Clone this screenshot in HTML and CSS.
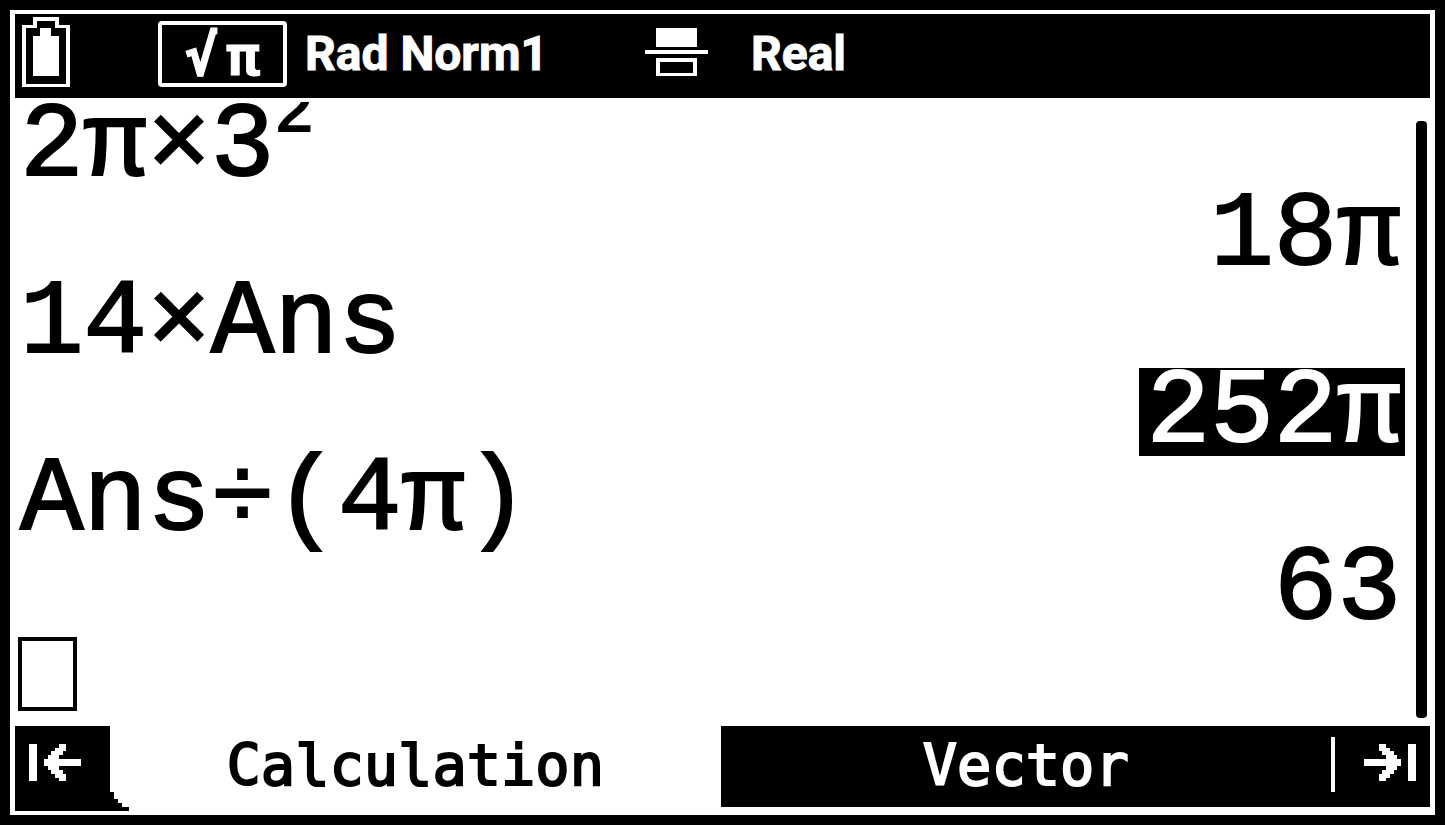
FILE: index.html
```html
<!DOCTYPE html>
<html lang="en">
<head>
    <meta charset="utf-8">
    <title>Calculator</title>
    <link rel="stylesheet" href="styles.css">
</head>
<body>
    <div class="screen">
        <header class="status">
            <svg class="battery" width="48" height="70" viewBox="0 0 48 70" role="img" aria-label="Battery full">
                <path fill-rule="evenodd" d="M11 0H37V8H48V70H0V8H11Z M15 4H33V11H44V67H4V11H15Z"/>
                <path d="M18 11H29V19H37V59H11V19H18Z"/>
            </svg>
            <div class="format"><span>√</span><span>π</span></div>
            <span class="angle">Rad Norm1</span>
            <svg class="fraction" width="63" height="48" viewBox="0 0 63 48" role="img" aria-label="Fraction results">
                <path fill-rule="evenodd" d="M11 0H52V19H11Z M0 22H63V26H0Z M11 30H52V48H11Z M15 34H48V45H15Z"/>
            </svg>
            <span>Real</span>
        </header>

        <main class="work">
            <div class="history">
                <div class="entry">2π×3<span class="power">2</span></div>
                <div class="result">18π</div>
                <div class="entry">14×Ans</div>
                <div class="result"><mark>252π</mark></div>
                <div class="entry">Ans÷(4π)</div>
                <div class="result">63</div>
                <div class="entry"><input class="cursor" type="text" aria-label="New calculation"></div>
            </div>
            <div class="scrollbar"></div>
        </main>

        <nav class="tabs">
            <button class="arrow first" type="button" aria-label="First tab">
                <svg width="52" height="37" viewBox="0 0 52 37">
                    <path d="M0 0H8V37H0Z M30 0H37V7H34V11H30V15H52V22H30V26H34V30H37V37H30V34H26V30H22V26H19V22H15V15H19V11H22V7H26V4H30Z"/>
                </svg>
                <svg class="corner" width="19" height="19" viewBox="0 0 19 19">
                    <path d="M0 0H4V7H8V11H12V15H19V19H0Z"/>
                </svg>
            </button>
            <button class="tab active" type="button">Calculation</button>
            <button class="tab" type="button">Vector</button>
            <button class="arrow last" type="button" aria-label="Last tab">
                <svg width="52" height="37" viewBox="0 0 52 37">
                    <path d="M44 0H52V37H44Z M22 0H15V7H18V11H22V15H0V22H22V26H18V30H15V37H22V34H26V30H30V26H33V22H37V15H33V11H30V7H26V4H22Z"/>
                </svg>
            </button>
        </nav>
    </div>
</body>
</html>
```

FILE: styles.css
```css
* {
    box-sizing: border-box;
}
body {
    margin: 0;
    padding: 10px;
    height: 100vh;
    background: #000;
}
button {
    border: 0;
    padding: 0;
    color: inherit;
    font: inherit;
}
svg {
    flex: none;
    fill: #fff;
    shape-rendering: crispEdges;
}
.screen {
    display: flex;
    flex-direction: column;
    height: 100%;
    padding: 4px 5px;
    background: #fff;
}

/* status bar */
.status {
    display: flex;
    align-items: center;
    height: 84px;
    padding: 0 7px 4px;
    background: #000;
    color: #fff;
    font: bold 48px/80px Roboto, sans-serif;
    white-space: pre;
    -webkit-text-stroke: 1px;
}
.battery, .fraction {
    margin-bottom: 4px;
}
.format {
    display: flex;
    justify-content: center;
    align-items: center;
    gap: 8px;
    width: 129px;
    height: 66px;
    margin: 0 18px 0 88px;
    border: 4px solid #fff;
    border-radius: 4px;
    padding-top: 4px;
    font: bold 56px/54px "DejaVu Sans Mono", monospace;
}
.angle {
    width: 340px;
}
.fraction {
    margin-right: 43px;
}

/* calculations */
.work {
    flex: 1;
    display: flex;
    gap: 11px;
    min-height: 0;
    padding: 4px 3px 4px 1px;
}
.history {
    flex: 1;
    display: grid;
    grid-template-rows: repeat(7, 1fr);
    overflow: hidden;
    font: 106px/90px "Liberation Mono", monospace;
    -webkit-text-stroke: 2px;
}
.entry, .result {
    min-height: 0;
    white-space: nowrap;
}
.entry {
    padding-left: 4px;
}
.result {
    padding-right: 4px;
    text-align: right;
}
.result mark {
    display: inline-block;
    height: 88px;
    margin-right: -4px;
    padding: 0 4px 0 8px;
    background: #000;
    color: #fff;
}
.power {
    font-size: 66px;
    line-height: 0;
    vertical-align: 44px;
}
.cursor {
    display: block;
    width: 59px;
    height: 74px;
    margin: 4px -2px;
    border: 4px solid #000;
    padding: 0 4px;
    background: #fff;
    font: inherit;
    font-size: 66px;
}
.scrollbar {
    width: 11px;
    margin-top: 19px;
    margin-bottom: 4px;
    border-radius: 4px;
    background: #000;
}

/* tabs */
.tabs {
    display: flex;
    height: 85px;
    color: #fff;
    font: 57px/72px "DejaVu Sans Mono", monospace;
    -webkit-text-stroke: 2px;
}
.tab, .arrow {
    margin-bottom: 4px;
    background: #000;
}
.tab {
    flex: 1;
    padding-bottom: 4px;
}
.tab.active {
    background: #fff;
    color: #000;
}
.arrow {
    display: flex;
    align-items: center;
    width: 95px;
    padding: 0 14px 8px;
}
.arrow.first {
    position: relative;
    margin-bottom: 0;
    padding-bottom: 12px;
}
.arrow.last {
    position: relative;
    justify-content: flex-end;
    width: 99px;
}
.arrow.last::before {
    content: "";
    position: absolute;
    left: 0;
    top: 11px;
    width: 4px;
    height: 55px;
    background: #fff;
}
.corner {
    position: absolute;
    left: 100%;
    bottom: 0;
    fill: #000;
}
```
